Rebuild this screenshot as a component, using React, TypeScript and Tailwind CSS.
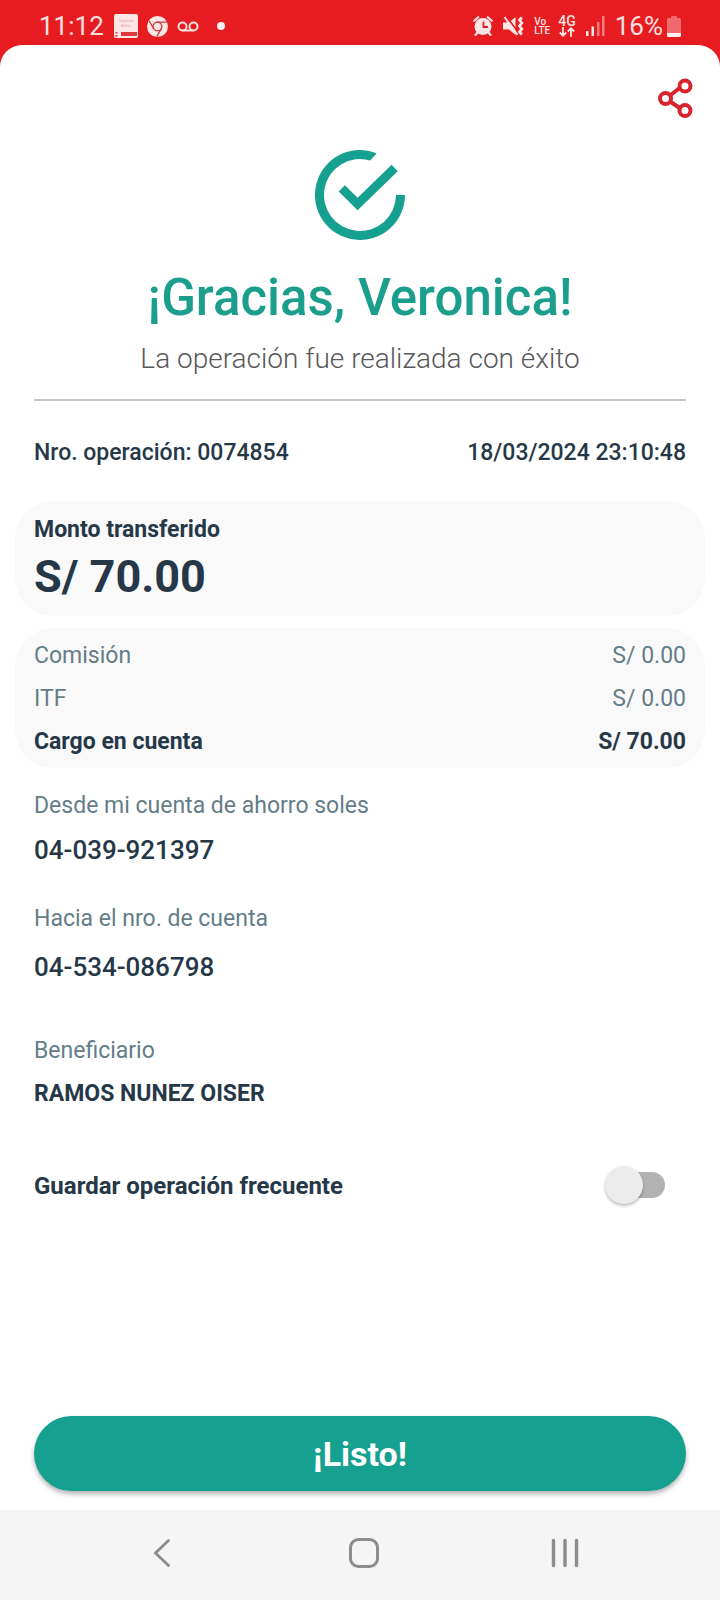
import { useState } from 'react'
import type { ReactNode } from 'react'

interface AmountRowProps {
  label: string
  value: string
  strong?: boolean
}

interface FieldProps {
  label: string
  children: ReactNode
  className?: string
}

const charges: AmountRowProps[] = [
  { label: 'Comisión', value: 'S/ 0.00' },
  { label: 'ITF', value: 'S/ 0.00' },
  { label: 'Cargo en cuenta', value: 'S/ 70.00', strong: true },
]

function BookIcon() {
  return (
    <svg className="w-6 h-6" viewBox="0 0 24 24" aria-hidden="true">
      <path d="M2 0h20a2 2 0 0 1 2 2v20a2 2 0 0 1-2 2H2a2 2 0 0 1-2-2V2a2 2 0 0 1 2-2z" fill="#fde6e6" />
      <path d="M7 18h16v4H7zM1.500 18h2v1.500h-2zM1.500 21h2v1.500h-2z" fill="#e2383c" />
      <text x="12" y="8" fontSize="4" textAnchor="middle" fill="#f0a0a2">Sagrada</text>
      <text x="12" y="13" fontSize="4" textAnchor="middle" fill="#f0a0a2">Biblia</text>
    </svg>
  )
}

function ChromeIcon() {
  return (
    <svg className="w-[21px] h-[21px]" viewBox="0 0 20 20" aria-hidden="true">
      <circle cx="10" cy="10" r="10" fill="#fde6e6" />
      <circle cx="10" cy="10" r="4.200" fill="#fde6e6" stroke="#c9383b" strokeWidth="1.200" />
      <path d="M10 5.800h8.800M6.400 12.100L2 4.600M13.600 12.100L9.300 19.600" stroke="#c9383b" strokeWidth="1.200" fill="none" />
    </svg>
  )
}

function VoicemailIcon() {
  return (
    <svg className="w-[22px] h-[11px]" viewBox="0 0 22 11" fill="none" stroke="#fde0e0" strokeWidth="2" aria-hidden="true">
      <circle cx="5.500" cy="5.500" r="4" />
      <circle cx="16.500" cy="5.500" r="4" />
      <path d="M5.500 9.500h11" />
    </svg>
  )
}

function AlarmIcon() {
  return (
    <svg className="w-5 h-5" viewBox="0 0 20 20" aria-hidden="true">
      <circle cx="10" cy="10.500" r="8.500" fill="#fde6e6" />
      <path d="M1.200 4.800l4-3.600M18.800 4.800l-4-3.600M4.500 16.500L2.500 19M15.500 16.500l2 2.500" stroke="#fde6e6" strokeWidth="2.200" strokeLinecap="round" />
      <path d="M10.500 5.500v5.500H15" stroke="#e61c21" strokeWidth="1.800" fill="none" />
    </svg>
  )
}

function MuteIcon() {
  return (
    <svg className="w-[21px] h-5" viewBox="0 0 21 20" fill="none" aria-hidden="true">
      <path d="M0 6.500h6L12.500 1v18L6 13.500H0z" fill="#fde6e6" />
      <path d="M3 0l12 16" stroke="#e61c21" strokeWidth="1.600" />
      <path d="M1.500 1l13 18" stroke="#fde6e6" strokeWidth="2" />
      <path d="M18.800 1.500l-2.300 2.500 2.300 3-2.300 3 2.300 3-2.300 3 2.300 2.500" stroke="#fde6e6" strokeWidth="2.800" />
    </svg>
  )
}

function DataArrowsIcon() {
  return (
    <svg className="w-4 h-[10px]" viewBox="0 0 16 10" fill="none" stroke="#fde6e6" strokeWidth="1.800" aria-hidden="true">
      <path d="M4 0v8.500M.8 5.500L4 8.700l3.200-3.200M12 10V1.500M8.800 4.500L12 1.300l3.200 3.200" />
    </svg>
  )
}

function SignalIcon() {
  return (
    <svg className="w-[19px] h-5" viewBox="0 0 19 20" aria-hidden="true">
      <path d="M0 15h2.500v5H0zM5.500 10.500H8V20H5.500z" fill="#fde6e6" />
      <path d="M11 6h2.500v14H11zM16 0h2.500v20H16z" fill="#f07a7d" />
    </svg>
  )
}

function BatteryIcon() {
  return (
    <svg className="w-[14px] h-[21px]" viewBox="0 0 14 21" aria-hidden="true">
      <path d="M4 0h6v2h2.500A1.500 1.500 0 0 1 14 3.500V17H0V3.500A1.500 1.500 0 0 1 1.500 2H4z" fill="#f0696d" />
      <path d="M0 17h14v2.500a1.500 1.500 0 0 1-1.500 1.500h-11A1.500 1.500 0 0 1 0 19.500z" fill="#fff0f0" />
    </svg>
  )
}

function StatusBar() {
  return (
    <header className="h-[45px] pt-[7px] pl-[39px] pr-[39px] flex items-center justify-between text-[#fde0e0]">
      <div className="flex items-center">
        <span className="text-[26px] leading-8">11:12</span>
        <div className="ml-2.5 flex items-center gap-[9px]">
          <BookIcon />
          <ChromeIcon />
          <VoicemailIcon />
        </div>
        <span className="ml-[18px] w-2 h-2 rounded-full bg-[#fff0f0]" />
      </div>
      <div className="flex items-center">
        <AlarmIcon />
        <div className="ml-2.5 flex">
          <MuteIcon />
        </div>
        <div className="ml-2.5 flex flex-col text-[10px] leading-[9px] font-medium">
          <span>Vo</span>
          <span>LTE</span>
        </div>
        <div className="ml-2 flex flex-col items-center">
          <span className="text-[14px] leading-3 font-medium">4G</span>
          <DataArrowsIcon />
        </div>
        <div className="ml-2.5 flex">
          <SignalIcon />
        </div>
        <span className="ml-2.5 mr-1 text-[26px] leading-8">16%</span>
        <BatteryIcon />
      </div>
    </header>
  )
}

function ShareIcon() {
  return (
    <svg className="w-9 h-10" viewBox="0 0 36 40" fill="none" stroke="#d8232a" strokeWidth="4" aria-hidden="true">
      <path d="M13 17.500l9-7M13 23.500l9 6" />
      <circle cx="28" cy="8" r="5.500" />
      <circle cx="8.500" cy="20.500" r="5.500" />
      <circle cx="28" cy="32.500" r="5.500" />
    </svg>
  )
}

function SuccessIcon() {
  return (
    <svg className="w-[90px] h-[90px]" viewBox="0 0 90 90" aria-hidden="true">
      <path
        d="M61.700 3.200A45 45 0 1 0 90 45h-9A36 36 0 1 1 55.300 10.500z"
        fill="#16a08f"
      />
      <path d="M26.800 38.400l15.800 15.600 37.100-36" fill="none" stroke="#16a08f" strokeWidth="8.800" />
    </svg>
  )
}

function AmountRow({ label, value, strong }: AmountRowProps) {
  return (
    <div className={`flex justify-between ${strong ? 'font-bold text-[#263848]' : 'text-[#647d88]'}`}>
      <dt>{label}</dt>
      <dd>{value}</dd>
    </div>
  )
}

function Field({ label, children, className = '' }: FieldProps) {
  return (
    <div className={`flex flex-col ${className}`}>
      <dt className="text-[#647d88]">{label}</dt>
      <dd className="text-[#263848]">{children}</dd>
    </div>
  )
}

function NavBar() {
  return (
    <nav className="h-[90px] bg-[#f5f5f5] pl-[138px] pr-[131px] pb-1 flex items-center justify-between">
      <button type="button" aria-label="Atrás" className="w-12 h-12 flex items-center justify-center">
        <svg className="w-[18px] h-[30px]" viewBox="0 0 18 30" fill="none" stroke="#8c8c8c" strokeWidth="2.800" strokeLinecap="round">
          <path d="M15.500 2.500L2.500 15l13 12.500" />
        </svg>
      </button>
      <button type="button" aria-label="Inicio" className="w-12 h-12 flex items-center justify-center">
        <svg className="w-[30px] h-[30px]" viewBox="0 0 30 30" fill="none" stroke="#8c8c8c" strokeWidth="3">
          <rect x="1.500" y="1.500" width="27" height="27" rx="8" />
        </svg>
      </button>
      <button type="button" aria-label="Recientes" className="w-12 h-12 flex items-center justify-center">
        <svg className="w-7 h-[30px]" viewBox="0 0 28 30" stroke="#8c8c8c" strokeWidth="3.400" strokeLinecap="round">
          <path d="M2.500 2.500v25M14 2.500v25M25.500 2.500v25" />
        </svg>
      </button>
    </nav>
  )
}

export default function App() {
  const [saved, setSaved] = useState(false)

  return (
    <div className="min-h-screen flex flex-col bg-[#e61c21] font-['Roboto','Liberation_Sans',sans-serif]">
      <StatusBar />

      <main className="flex-1 flex flex-col bg-white rounded-t-[22px] px-[15px] pb-[19px] text-[23px] leading-[30px] text-[#263848]">
        <div className="pt-[33px] pr-3 flex justify-end">
          <button type="button" aria-label="Compartir">
            <ShareIcon />
          </button>
        </div>

        {/* Confirmation */}
        <section className="mx-[19px] mt-8 flex flex-col items-center text-center border-b-2 border-[#c8c8c8] pb-[22px]">
          <SuccessIcon />
          <h1 className="mt-7 text-[51px] leading-[60px] font-medium text-[#1c9e8d]">¡Gracias, Veronica!</h1>
          <p className="mt-[13px] text-[28px] leading-9 font-light text-[#58585a]">
            La operación fue realizada con éxito
          </p>
        </section>

        <div className="mx-[19px] mt-[37px] flex justify-between font-medium">
          <span>Nro. operación: 0074854</span>
          <time dateTime="2024-03-18T23:10:48">18/03/2024 23:10:48</time>
        </div>

        {/* Amounts */}
        <section className="mt-[33px] rounded-[38px] bg-[#f9f9f9] px-[19px] pt-[14px] pb-[13px]">
          <h2 className="font-bold">Monto transferido</h2>
          <p className="mt-1.5 text-[45px] leading-[52px] font-bold">S/ 70.00</p>
        </section>
        <dl className="mt-3 rounded-[38px] bg-[#f9f9f9] px-[19px] pt-[13px] pb-[11px] flex flex-col gap-[13px]">
          {charges.map((row) => (
            <AmountRow key={row.label} {...row} />
          ))}
        </dl>

        {/* Accounts */}
        <dl className="mx-[19px] mt-[23px]">
          <Field label="Desde mi cuenta de ahorro soles" className="gap-[13px]">
            <span className="block text-[26px] leading-8 font-medium">04-039-921397</span>
          </Field>
          <Field label="Hacia el nro. de cuenta" className="mt-[38px] gap-[17px]">
            <span className="block text-[26px] leading-8 font-medium">04-534-086798</span>
          </Field>
          <Field label="Beneficiario" className="mt-[53px] gap-[13px]">
            <span className="block font-bold">RAMOS NUNEZ OISER</span>
          </Field>
        </dl>

        <div className="ml-[19px] mr-10 mt-[57px] h-[38px] flex items-center justify-between">
          <label htmlFor="save-operation" className="pt-0.5 text-[24px] font-bold">
            Guardar operación frecuente
          </label>
          <input
            id="save-operation"
            type="checkbox"
            role="switch"
            checked={saved}
            onChange={(e) => setSaved(e.target.checked)}
            className="relative appearance-none w-[54px] h-[26px] rounded-full bg-[#b2b2b2] checked:bg-[#8fd0c8] before:absolute before:-left-1.5 before:-top-1.5 before:w-[38px] before:h-[38px] before:rounded-full before:bg-[#ececec] before:shadow-[0_2px_3px_rgba(0,0,0,0.25)] checked:before:left-6 checked:before:bg-[#16a08f]"
          />
        </div>

        <div className="mt-auto pt-10 px-[19px]">
          <button
            type="button"
            className="w-full h-[75px] rounded-full bg-[#16a08f] text-white text-[34px] leading-10 font-bold shadow-[0_3px_5px_rgba(0,0,0,0.3)]"
          >
            ¡Listo!
          </button>
        </div>
      </main>

      <NavBar />
    </div>
  )
}
